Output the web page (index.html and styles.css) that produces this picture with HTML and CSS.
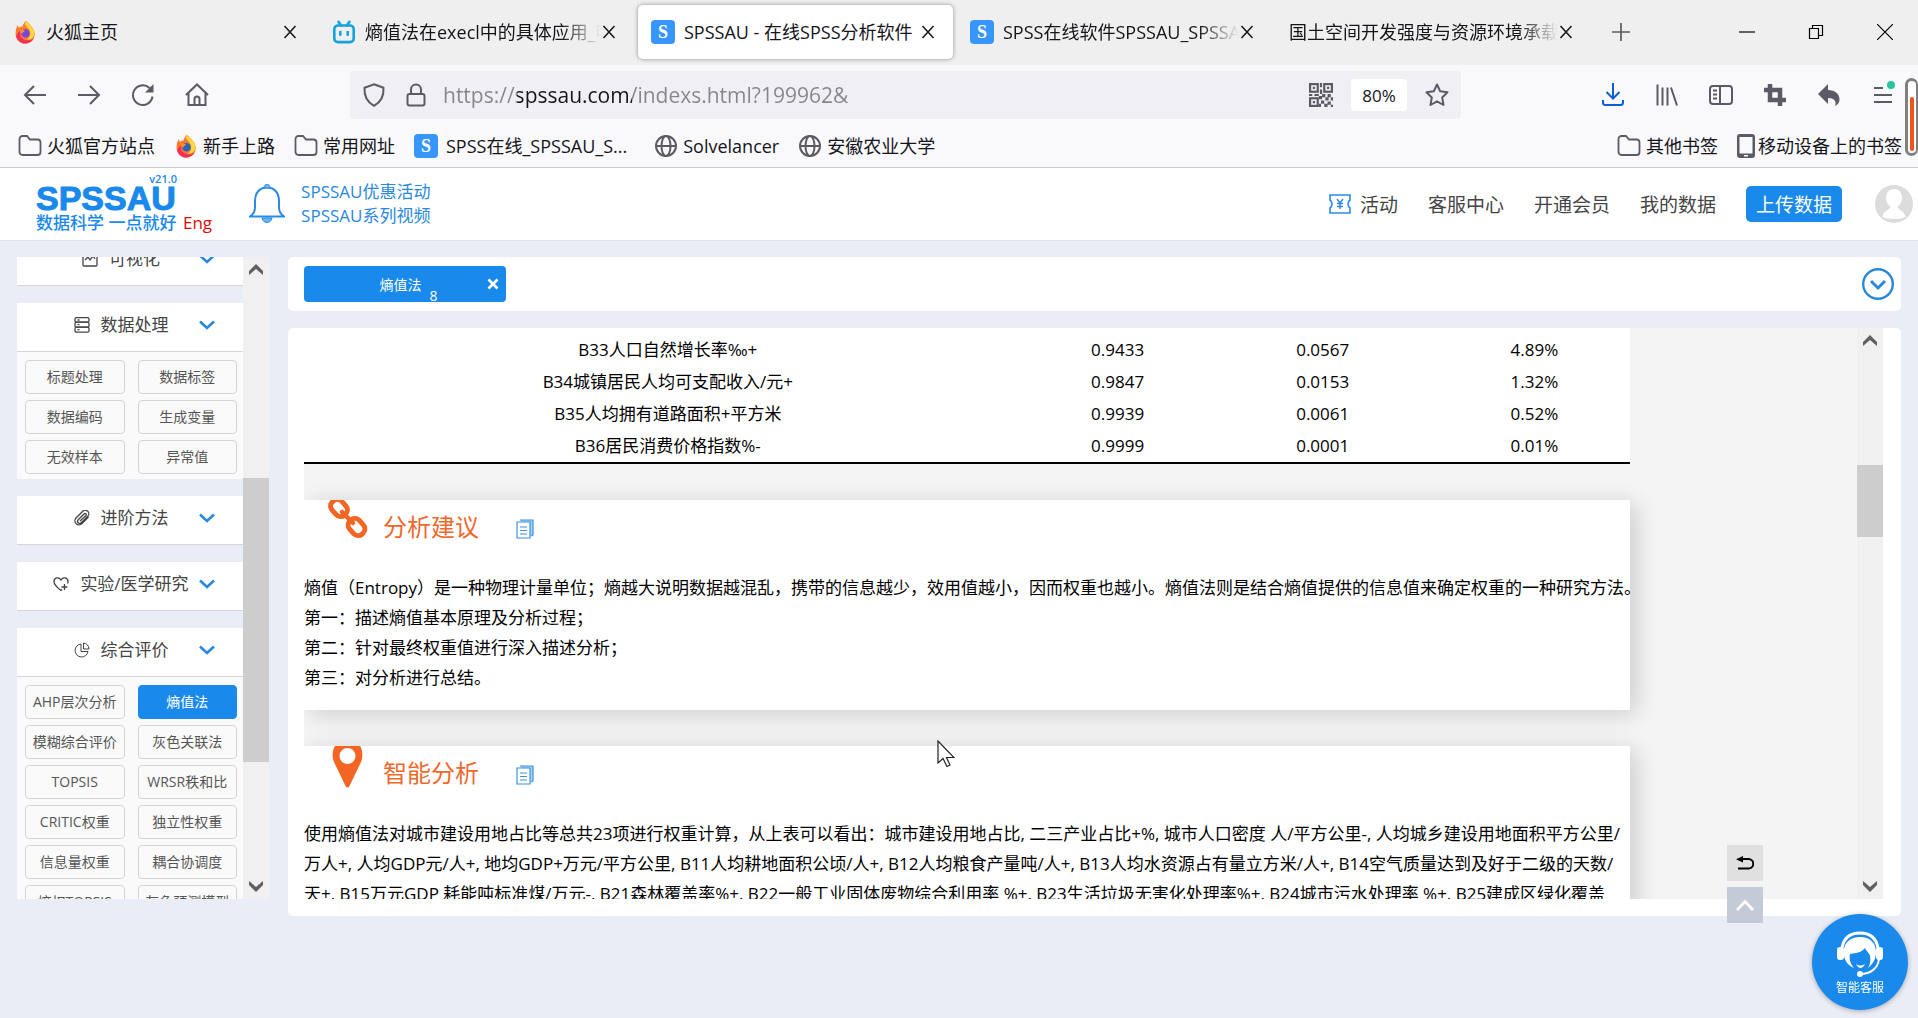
FILE: index.html
```html
<!DOCTYPE html>
<html lang="zh-CN">
<head>
<meta charset="utf-8">
<title>SPSSAU - 在线SPSS分析软件</title>
<link rel="stylesheet" href="styles.css">
</head>
<body>
<svg class="defs" aria-hidden="true">
  <symbol id="i-x" viewBox="0 0 16 16"><path d="M2.500 2l11 12M13.500 2l-11 12" fill="none" stroke="currentColor" stroke-width="1.500"/></symbol>
  <symbol id="i-folder" viewBox="0 0 24 24"><path d="M1.500 5a3 3 0 0 1 3-3h4.500l3 3.500h7.500a3 3 0 0 1 3 3V18a3 3 0 0 1-3 3h-15a3 3 0 0 1-3-3z" fill="none" stroke="currentColor" stroke-width="1.800"/></symbol>
  <symbol id="i-globe" viewBox="0 0 24 24"><g fill="none" stroke="currentColor" stroke-width="2"><circle cx="12" cy="12" r="10"/><ellipse cx="12" cy="12" rx="4.500" ry="10"/><path d="M2 12h20"/></g></symbol>
  <symbol id="i-down" viewBox="0 0 16 10"><path d="M1 1.500l7 6.500 7-6.500" fill="none" stroke="currentColor" stroke-width="2.600"/></symbol>
  <symbol id="i-sdown" viewBox="0 0 14 12"><path d="M0 0l7 6 7-6v4l-7 7-7-7z" fill="currentColor"/></symbol>
  <symbol id="i-sup" viewBox="0 0 14 12"><path d="M0 12l7-6 7 6v-4L7 1 0 8z" fill="currentColor"/></symbol>
  <symbol id="i-fox" viewBox="0 0 24 28">
    <path d="M13 1c3 2 4 4 6 6 4 4 5 8 4 12-1 5-5 8.500-11 8.500S1 23 1 16c0-4 1-7 2-10l2 3c1-1 3-1.500 4-1.500C10 5 11 3 13 1z" fill="#ff7a2c"/>
    <path d="M13 1c-2 4 0 6 3 9 3 4 3 10-2 13 5 1 9-3 9-8 0-5-4-7-6-10-1.500-2-3-3-4-4z" fill="#ffd83b"/>
    <path d="M1.500 19c2 5 6 8.500 10.500 8.500 4 0 8-2 10-6-4 3-9 3-13 0-3-2-3-6-2-9-3 1-4 4-5.500 6.500z" fill="#f22f5c"/>
    <circle cx="12.500" cy="15.500" r="5" fill="var(--core)"/>
    <path d="M6 12c2-1 4-1 6 0-1 2-3 2-3 4-2-1-3-2-3-4z" fill="#ff8f2a"/>
  </symbol>
  <symbol id="i-copy" viewBox="0 0 18 20"><path d="M4 1h13v15l-2 1" fill="#a9d3f8" stroke="#3d92dd" stroke-width="1.200"/><path d="M1 3h13v16H1z" fill="#fff" stroke="#3d92dd" stroke-width="1.200"/><path d="M4 8h7M4 11.500h7M4 15h7" stroke="#3d92dd" stroke-width="1.200"/></symbol>
</svg>

<header class="browser">
  <nav class="tabs">
    <div class="tab">
      <svg class="ico tab-ico core-violet"><use href="#i-fox"/></svg>
      <span class="tab-title">火狐主页</span>
      <button class="tab-x" aria-label="关闭"><svg><use href="#i-x"/></svg></button>
    </div>
    <div class="tab">
      <svg class="ico tab-ico" viewBox="0 0 24 26"><g fill="none" stroke="#14a3d9" stroke-width="2.800" stroke-linecap="round"><rect x="1.500" y="6" width="21" height="18" rx="4"/><path d="M6 2l3 4M18 2l-3 4M8 13v3M16 13v3"/></g></svg>
      <span class="tab-title fade">熵值法在execl中的具体应用_哔哩</span>
      <button class="tab-x" aria-label="关闭"><svg><use href="#i-x"/></svg></button>
    </div>
    <div class="tab active">
      <span class="ico tab-ico s-logo">S</span>
      <span class="tab-title">SPSSAU - 在线SPSS分析软件</span>
      <button class="tab-x" aria-label="关闭"><svg><use href="#i-x"/></svg></button>
    </div>
    <div class="tab">
      <span class="ico tab-ico s-logo">S</span>
      <span class="tab-title fade">SPSS在线软件SPSSAU_SPSSAU</span>
      <button class="tab-x" aria-label="关闭"><svg><use href="#i-x"/></svg></button>
    </div>
    <div class="tab">
      <span class="tab-title fade">国土空间开发强度与资源环境承载力</span>
      <button class="tab-x" aria-label="关闭"><svg><use href="#i-x"/></svg></button>
    </div>
    <button class="new-tab" aria-label="新标签"><svg viewBox="0 0 18 18"><path d="M9 0v18M0 9h18" stroke="#5b5b66" stroke-width="1.700"/></svg></button>
    <div class="win">
      <button aria-label="最小化"><svg viewBox="0 0 16 16"><path d="M0 8h16" stroke="#000" stroke-width="1.200"/></svg></button>
      <button aria-label="还原"><svg viewBox="0 0 16 16"><path d="M1.500 4.500h9v10h-9zM4.500 4.500v-3h10v10h-4" fill="none" stroke="#000" stroke-width="1.200"/></svg></button>
      <button aria-label="关闭窗口"><svg viewBox="0 0 16 16"><path d="M0 0l16 16M16 0L0 16" stroke="#000" stroke-width="1.200"/></svg></button>
    </div>
  </nav>

  <div class="toolbar">
    <div class="nav-btns">
      <button aria-label="后退"><svg viewBox="0 0 24 24"><path d="M23 12H2M11 3L2 12l9 9" /></svg></button>
      <button aria-label="前进"><svg viewBox="0 0 24 24"><path d="M1 12h21M13 3l9 9-9 9"/></svg></button>
      <button aria-label="刷新"><svg viewBox="0 0 24 24"><path d="M21.500 13.500a9.800 9.800 0 1 1-3-8.500"/><path d="M22.500 1v8.500H14z" fill="currentColor" stroke="none"/></svg></button>
      <button aria-label="主页"><svg viewBox="0 0 24 24"><path d="M1 12L12 1.500 23 12M3.500 10v12h17V10M9.500 22v-6a2.500 2.500 0 0 1 5 0v6"/></svg></button>
    </div>
    <div class="urlbar">
      <svg class="ub-ico" viewBox="0 0 24 24"><path d="M12 1.200l9.500 3.600c.5 8-2 14-9.500 18C4.500 18.800 2 12.800 2.500 4.800z"/></svg>
      <svg class="ub-ico lock" viewBox="0 0 24 24"><rect x="3.500" y="11" width="17" height="11.500" rx="2"/><path d="M7 11V6.500a5 5 0 0 1 10 0V11"/></svg>
      <input class="url" aria-label="网址" value="https://spssau.com/indexs.html?199962&amp;">
      <svg class="ub-ico qr" viewBox="0 0 22 22"><g fill="none" stroke-width="2"><rect x="1" y="1" width="7" height="7"/><rect x="14" y="1" width="7" height="7"/><rect x="1" y="14" width="7" height="7"/></g><path stroke="none" fill="currentColor" d="M3.500 3.500h2v2h-2zM16.500 3.500h2v2h-2zM3.500 16.500h2v2h-2zM10 0h2v4h-2zM10 6h2v4h-2zM0 10h3v2H0zM5 10h4v2H5zM12 10h3v3h-3zM17 10h3v3h-3zM9 12h3v3H9zM15 13h3v3h-3zM20 13h2v3h-2zM11 16h3v3h-3zM17 17h3v3h-3zM14 19h3v3h-3zM20 20h2v2h-2zM9 19h2v3H9z"/></svg>
      <button class="zoom">80%</button>
      <svg class="ub-ico" viewBox="0 0 24 24"><path stroke-linejoin="round" d="M12 1.500l3.200 6.800 7.300 1-5.300 5.200 1.300 7.500-6.500-3.600L5.500 22l1.300-7.500L1.500 9.300l7.300-1z"/></svg>
    </div>
    <div class="tools">
      <button class="dl" aria-label="下载"><svg viewBox="0 0 24 24"><path d="M12 0v15M5.500 9l6.500 6.500L18.500 9M2 17v2.500A2.500 2.500 0 0 0 4.500 22h15a2.500 2.500 0 0 0 2.500-2.500V17"/></svg></button>
      <button aria-label="书库"><svg viewBox="0 0 24 24"><path d="M2.500 1.500v21M7.500 4.500v18M12.500 4.500v18M16 4.500l6 18"/></svg></button>
      <button aria-label="侧栏"><svg viewBox="0 0 24 24"><rect x="1" y="3" width="22" height="18" rx="3"/><path d="M11 3v18M4 7.500h4M4 11.500h4M4 15.500h4"/></svg></button>
      <button aria-label="截图"><svg viewBox="0 0 24 24"><path d="M7 1v16h16M1 7h16v16" stroke-width="4.500"/></svg></button>
      <button aria-label="撤销"><svg viewBox="0 0 24 24"><path stroke="none" fill="currentColor" d="M11 1v6c7 0 11.500 4 11.500 9.500 0 3-1.500 5-4.500 6.500 2-5-1-8-7-8v6L1 11z"/></svg></button>
      <button class="menu" aria-label="菜单"><svg viewBox="0 0 24 24"><path d="M3 5h9M3 12h18M3 19h18"/><circle cx="20" cy="2" r="4" fill="#2ac3a2" stroke="none"/></svg></button>
    </div>
  </div>

  <nav class="bookmarks">
    <a href="#"><svg class="ico"><use href="#i-folder"/></svg>火狐官方站点</a>
    <a href="#"><svg class="ico core-blue"><use href="#i-fox"/></svg>新手上路</a>
    <a href="#"><svg class="ico"><use href="#i-folder"/></svg>常用网址</a>
    <a href="#" class="wide"><span class="ico s-logo">S</span>SPSS在线_SPSSAU_S...</a>
    <a href="#"><svg class="ico"><use href="#i-globe"/></svg>Solvelancer</a>
    <a href="#"><svg class="ico"><use href="#i-globe"/></svg>安徽农业大学</a>
    <a href="#" class="push"><svg class="ico"><use href="#i-folder"/></svg>其他书签</a>
    <a href="#" class="phone"><svg class="ico" viewBox="0 0 18 24"><path fill="currentColor" fill-rule="evenodd" d="M3 0h12a3 3 0 0 1 3 3v18a3 3 0 0 1-3 3H3a3 3 0 0 1-3-3V3a3 3 0 0 1 3-3zM2.500 3v16.500h13V3zM7 21h4v1.500H7z"/></svg>移动设备上的书签</a>
  </nav>
  <div class="meter"><span></span></div>
</header>

<header class="site">
  <a href="#" class="logo">
    <span class="ver">v21.0</span>
    <span class="brand">SPSSAU</span>
    <span class="slogan">数据科学 一点就好</span>
  </a>
  <a href="#" class="eng">Eng</a>
  <svg class="bell" viewBox="0 0 36 40"><path d="M1 32.500c3-2 5-4 5-9V17C6 9 10.500 3.500 18 3.500S30 9 30 17v6.500c0 5 2 7 5 9z" fill="none" stroke="#2a8ae6" stroke-width="2"/><path d="M13 34c1 6 9 6 10 0zM15 4c0-5 6-5 6 0z" fill="#6fb3f2" stroke="#2a8ae6"/></svg>
  <div class="promo"><a href="#">SPSSAU优惠活动</a><a href="#">SPSSAU系列视频</a></div>
  <nav class="site-nav">
    <a href="#" class="act"><svg viewBox="0 0 22 20"><path d="M1 1h20v5a5 5 0 0 0 0 8v5H1v-5a5 5 0 0 0 0-8z" fill="none" stroke="#2a8ae6" stroke-width="1.600"/><path d="M8 5l3 4 3-4M11 9v6M8 9.500h6M8 12.500h6" fill="none" stroke="#2a8ae6" stroke-width="1.400"/></svg>活动</a>
    <a href="#">客服中心</a>
    <a href="#">开通会员</a>
    <a href="#">我的数据</a>
    <button class="upload">上传数据</button>
    <svg class="avatar" viewBox="0 0 38 38"><circle cx="19" cy="19" r="19" fill="#dcdcdc"/><path d="M19 4c-5 0-8 4-8 9 0 4 2 7 4.500 9-1 3-7.500 4-8 10 4 2.500 19 2.500 23 0-.5-6-7-7-8-10C25 20 27 17 27 13c0-5-3-9-8-9z" fill="#fff"/></svg>
  </nav>
</header>

<main class="work">
  <div class="side">
    <div class="side-list">
      <section class="group">
        <button class="head"><span class="label"><svg viewBox="0 0 16 16"><rect x="1" y="1" width="14" height="14" rx="1"/><path d="M3 9l3-3 2 3 3-4 2 3"/></svg>可视化</span><svg class="chev"><use href="#i-down"/></svg></button>
      </section>
      <section class="group">
        <button class="head"><span class="label"><svg viewBox="0 0 16 16"><rect x="1" y="0.600" width="14" height="4.600" rx="1.500"/><rect x="1" y="5.200" width="14" height="5" rx="1.500"/><rect x="1" y="10.200" width="14" height="5" rx="1.500"/><path d="M3.500 3h2M3.500 7.700h2M3.500 12.700h2"/></svg>数据处理</span><svg class="chev"><use href="#i-down"/></svg></button>
        <div class="items">
          <button>标题处理</button><button>数据标签</button>
          <button>数据编码</button><button>生成变量</button>
          <button>无效样本</button><button>异常值</button>
        </div>
      </section>
      <section class="group">
        <button class="head"><span class="label"><svg viewBox="0 0 16 16"><path d="M14.500 7l-6.500 6.500a4 4 0 0 1-6-5.500L8.500 1.500a3.500 3.500 0 0 1 5.500 4.500l-6.500 6.500a2 2 0 0 1-3.500-2.500L10 4a1 1 0 0 1 2 1.500L6 11"/></svg>进阶方法</span><svg class="chev"><use href="#i-down"/></svg></button>
      </section>
      <section class="group">
        <button class="head"><span class="label"><svg viewBox="0 0 16 16"><path d="M8 14.500C4 11.500 1 9 1 5.500 1 1.500 6 .5 8 4c2-3.500 7-2.500 7 1.500 0 .8-.1 1.500-.4 2M8 14.500l1-1M11.500 8v6M8.500 11h6"/></svg>实验/医学研究</span><svg class="chev"><use href="#i-down"/></svg></button>
      </section>
      <section class="group">
        <button class="head"><span class="label"><svg viewBox="0 0 16 16"><path d="M7 2a6.500 6.500 0 1 0 7 7.500H7zM9.500 1v6H15A6 6 0 0 0 9.500 1z" stroke-width="1"/></svg>综合评价</span><svg class="chev"><use href="#i-down"/></svg></button>
        <div class="items">
          <button>AHP层次分析</button><button class="on">熵值法</button>
          <button>模糊综合评价</button><button>灰色关联法</button>
          <button>TOPSIS</button><button>WRSR秩和比</button>
          <button>CRITIC权重</button><button>独立性权重</button>
          <button>信息量权重</button><button>耦合协调度</button>
          <button>熵权TOPSIS</button><button>灰色预测模型</button>
        </div>
      </section>
    </div>
    <div class="bar side-bar"><svg class="arrow"><use href="#i-sup"/></svg><span class="thumb"></span><svg class="arrow"><use href="#i-sdown"/></svg></div>
  </div>

  <div class="content">
    <div class="chips">
      <div class="chip"><span>熵值法</span><sub>8</sub><button aria-label="关闭"><svg viewBox="0 0 12 12"><path d="M1.500 1.500l9 9M10.500 1.500l-9 9" stroke="#fff" stroke-width="2.600"/></svg></button></div>
      <button class="more" aria-label="展开"><svg viewBox="0 0 32 32"><circle cx="16" cy="16" r="14.800"/><path d="M9 13l7 7 7-7" stroke-width="3"/></svg></button>
    </div>
    <div class="result">
      <div class="report">
        <table class="weights">
          <colgroup><col class="c1"><col class="c2"><col class="c3"><col class="c4"></colgroup>
          <tbody>
          <tr><td>B33人口自然增长率‰+</td><td>0.9433</td><td>0.0567</td><td>4.89%</td></tr>
          <tr><td>B34城镇居民人均可支配收入/元+</td><td>0.9847</td><td>0.0153</td><td>1.32%</td></tr>
          <tr><td>B35人均拥有道路面积+平方米</td><td>0.9939</td><td>0.0061</td><td>0.52%</td></tr>
          <tr><td>B36居民消费价格指数%-</td><td>0.9999</td><td>0.0001</td><td>0.01%</td></tr>
          </tbody>
        </table>
        <section class="card">
          <div class="card-head">
            <svg class="mark" viewBox="0 0 44 42"><g fill="none" stroke="#f26522" stroke-width="5"><rect x="7.500" y="-1" width="13" height="18" rx="6" transform="rotate(-42 14 8)"/><rect x="25" y="18" width="13" height="18" rx="6" transform="rotate(-42 31.500 27)"/><path d="M17 12l11 11" stroke-width="4.500" stroke-linecap="round"/></g></svg>
            <h2>分析建议</h2>
            <button aria-label="复制"><svg><use href="#i-copy"/></svg></button>
          </div>
          <p>熵值（Entropy）是一种物理计量单位；熵越大说明数据越混乱，携带的信息越少，效用值越小，因而权重也越小。熵值法则是结合熵值提供的信息值来确定权重的一种研究方法。<br>第一：描述熵值基本原理及分析过程；<br>第二：针对最终权重值进行深入描述分析；<br>第三：对分析进行总结。</p>
        </section>
        <section class="card">
          <div class="card-head">
            <svg class="mark" viewBox="0 0 44 42"><path fill="#f26522" fill-rule="evenodd" d="M10 0h25c3 5 3 11 1 16L24.500 40q-2 3-4 0L9 16C7 11 7 5 10 0zM22.500 2a8 8 0 1 0 0 16 8 8 0 0 0 0-16z"/></svg>
            <h2>智能分析</h2>
            <button aria-label="复制"><svg><use href="#i-copy"/></svg></button>
          </div>
          <p>使用熵值法对城市建设用地占比等总共23项进行权重计算，从上表可以看出：城市建设用地占比, 二三产业占比+%, 城市人口密度 人/平方公里-, 人均城乡建设用地面积平方公里/<br>万人+, 人均GDP元/人+, 地均GDP+万元/平方公里, B11人均耕地面积公顷/人+, B12人均粮食产量吨/人+, B13人均水资源占有量立方米/人+, B14空气质量达到及好于二级的天数/<br>天+, B15万元GDP 耗能吨标准煤/万元-, B21森林覆盖率%+, B22一般工业固体废物综合利用率 %+, B23生活垃圾无害化处理率%+, B24城市污水处理率 %+, B25建成区绿化覆盖</p>
        </section>
      </div>
      <div class="bar main-bar"><svg class="arrow"><use href="#i-sup"/></svg><span class="thumb"></span><svg class="arrow"><use href="#i-sdown"/></svg></div>
    </div>
  </div>
</main>

<div class="floaters">
  <button class="back" aria-label="返回"><svg viewBox="0 0 18 14"><path d="M5 3h7.500a4 4 0 0 1 0 9.500H2" fill="none" stroke="#000" stroke-width="2"/><path d="M7 0v6.500L0 3.200z"/></svg></button>
  <button class="top" aria-label="回到顶部"><svg viewBox="0 0 18 12"><path d="M1 11l8-8.500 8 8.500" fill="none" stroke="#fff" stroke-width="2.600"/></svg></button>
</div>
<button class="service">
  <svg viewBox="0 0 46 46"><path d="M5 17C7 6 14 2 23 2s16 4 18 15" fill="none" stroke="#fff" stroke-width="3"/><path d="M23 6C13 6 8 12 7 18c-1 5 0 10 4 15 2 2 4 3 6 4-4-5-5-9-4-14 7-1 12-2 15-6 2 4 5 6 5 8 1 5 0 9-2 12 5-4 8-9 8-16C39 12 33 6 23 6z" fill="#fff"/><rect x="0" y="16" width="7" height="13" rx="3" fill="#fff"/><rect x="39" y="16" width="7" height="13" rx="3" fill="#fff"/><path d="M42 28c-1 9-8 15-19 15" fill="none" stroke="#fff" stroke-width="2"/><circle cx="23" cy="43" r="3" fill="#fff"/><path d="M19 33q4 3 9 0-2 4-4.500 4T19 33z" fill="#fff"/></svg>
  智能客服
</button>
<svg class="cursor" viewBox="0 0 18 28"><path d="M1 1v22l5-4.500 4 8 3-1.500-3.500-7.500H17z" fill="#fff" stroke="#222" stroke-width="1.200"/></svg>
</body>
</html>
```
FILE: styles.css
```css
:root {
  --blue: #1989ec;
  --link: #2a88dc;
  --orange: #f0682c;
  --ink: #5b5b66;
}
* { box-sizing: border-box; }
body {
  margin: 0;
  min-height: 100vh;
  display: flex;
  flex-direction: column;
  background: #eaedf5;
  color: #000;
  font-family: "Open Sans", "Noto Sans CJK SC", sans-serif;
  font-size: 17px;
}
button {
  margin: 0;
  padding: 0;
  border: 0;
  background: none;
  font: inherit;
  color: inherit;
}
a { color: inherit; text-decoration: none; }
svg { display: block; }
.defs { display: none; }

/* browser chrome */
.browser { position: relative; background: #f9f9fb; border-bottom: 1px solid #ccc; font-size: 18px; color: #15141a; }
.tabs { display: flex; align-items: center; gap: 4px; height: 65px; padding-bottom: 1px; background: #efefef; }
.tab {
  flex: 0 1 315px;
  min-width: 0;
  display: flex;
  align-items: center;
  height: 54px;
  padding: 0 17px 0 13px;
  border-radius: 5px;
}
.tab.active { background: #fff; box-shadow: 0 0 4px rgba(0, 0, 0, .4); }
.ico { flex: none; width: 24px; height: 24px; color: var(--ink); }
.tab-ico { margin-right: 9px; }
.core-violet { --core: #7a46d8; }
.core-blue { --core: #2767b8; }
.s-logo {
  border-radius: 4px;
  background: #3796fc;
  color: #fff;
  font: 700 18px/24px "Liberation Serif", serif;
  text-align: center;
}
.tab-title { flex: 1; min-width: 0; overflow: hidden; white-space: nowrap; line-height: 28px; }
.tab-title.fade { mask-image: linear-gradient(to right, #000 calc(100% - 40px), transparent); }
.tab-x { flex: none; width: 16px; height: 16px; }
.tab-x svg { width: 16px; height: 16px; }
.new-tab { width: 18px; margin-left: 17px; }
.win { display: flex; gap: 53px; margin-left: auto; padding-right: 25px; }
.win svg { width: 16px; height: 16px; }

.toolbar { display: flex; align-items: center; padding: 6px 23px 0; color: var(--ink); }
.toolbar svg { width: 24px; height: 24px; fill: none; stroke: currentColor; stroke-width: 2; }
.nav-btns { display: flex; gap: 30px; width: 327px; }
.urlbar {
  flex: 1;
  display: flex;
  align-items: center;
  height: 48px;
  padding: 0 12px;
  border-radius: 4px;
  background: #f0f0f4;
}
.ub-ico { flex: none; margin-right: 18px; }
.ub-ico.lock { margin-right: 15px; }
.ub-ico:last-child { margin-right: 0; }
.url {
  flex: 1;
  min-width: 0;
  height: 32px;
  padding: 0;
  border: 0;
  outline: 0;
  font: inherit;
  font-size: 21px;
  line-height: 32px;
  color: transparent;
  caret-color: #000;
  background: linear-gradient(to right, #85858c 74px, #15141a 74px, #15141a 189px, #85858c 189px);
  background-clip: text;
}
.zoom { width: 56px; height: 32px; margin-right: 18px; border-radius: 4px; background: #fff; color: #15141a; font-size: 17px; }
.tools { display: flex; gap: 30px; margin-left: 140px; }
.dl { color: #0a5fd8; }
.tools svg { overflow: visible; }

.bookmarks { display: flex; align-items: center; gap: 19px; height: 48px; padding: 5px 16px 0 18px; }
.bookmarks a { display: flex; align-items: center; gap: 5px; line-height: 28px; white-space: nowrap; }
.bookmarks .wide { gap: 8px; margin-right: 8px; }
.bookmarks .push { margin-left: auto; }
.bookmarks .phone { gap: 3px; }
.phone .ico { width: 18px; }
.meter {
  position: absolute;
  right: 0;
  bottom: 11px;
  width: 13px;
  height: 78px;
  padding: 16px 2px 2px;
  border: 3px solid #808080;
  border-right-width: 2px;
  border-radius: 7px;
  background: #fff;
}
.meter span { display: block; height: 100%; border-radius: 3px; background: #f0541e; }

/* site header */
.site { display: flex; align-items: center; height: 73px; padding: 0 5px 0 36px; background: #fff; border-bottom: 1px solid #dfe2ea; }
.logo { display: flex; flex-direction: column; width: 141px; color: var(--blue); }
.ver { font-size: 11px; font-weight: 600; line-height: 12px; text-align: right; }
.brand { font: 700 34px/26px "Liberation Sans", sans-serif; -webkit-text-stroke: 1px var(--blue); }
.slogan { font-size: 17px; font-weight: 500; line-height: 24px; white-space: nowrap; }
.eng { align-self: flex-end; margin: 0 37px 3px 6px; color: #d80c0c; line-height: 28px; }
.bell { width: 36px; height: 40px; margin-right: 16px; }
.promo { display: flex; flex-direction: column; color: var(--link); font-size: 17px; line-height: 24px; }
.site-nav { display: flex; align-items: center; gap: 30px; margin-left: auto; color: #444; font-size: 19px; }
.act { display: flex; align-items: center; gap: 9px; }
.act svg { width: 22px; height: 20px; }
.upload { width: 96px; height: 36px; border-radius: 5px; background: var(--blue); color: #fff; }
.avatar { width: 38px; height: 38px; margin-left: 3px; }

/* workspace */
.work { flex: 1; display: flex; gap: 19px; padding: 16px 17px 102px 17px; }
.side { flex: none; display: flex; width: 252px; height: calc(100vh - 376px); overflow: hidden; }
.side-list { flex: 1; margin-top: -20px; }
.group { margin-bottom: 17px; background: #fafafa; }
.head {
  display: flex;
  align-items: center;
  width: 100%;
  height: 49px;
  padding: 0 28px 4px 26px;
  border-bottom: 1px solid #d6d6d6;
  background: #fff;
  color: #444;
}
.label { flex: 1; display: flex; align-items: center; justify-content: center; gap: 11px; line-height: 24px; white-space: nowrap; }
.label svg { width: 16px; height: 16px; fill: none; stroke: #444; stroke-width: 1.3; }
.chev { width: 16px; height: 10px; color: var(--link); }
.items { display: grid; grid-template-columns: 1fr 1fr; gap: 6px 13px; padding: 8px 6px 5px 8px; }
.items button {
  height: 34px;
  border: 1px solid #d5d5d5;
  border-radius: 4px;
  color: #555;
  font-size: 14px;
  line-height: 20px;
  white-space: nowrap;
}
.items .on { border-color: var(--blue); background: var(--blue); color: #fff; }
.bar { flex: none; display: flex; flex-direction: column; align-items: center; width: 26px; padding: 6px 0; background: #f0f0f0; }
.arrow { flex: none; width: 14px; height: 12px; color: #606060; }
.thumb { width: 26px; background: #cdcdcd; }
.side-bar .thumb { height: 284px; margin: 203px 0 auto; }
.main-bar .thumb { height: 72px; margin: 119px 0 auto; }

.content { flex: 1; min-width: 0; display: flex; flex-direction: column; gap: 17px; }
.chips { display: flex; align-items: center; justify-content: space-between; height: 54px; padding: 0 7px 0 16px; border-radius: 5px; background: #fff; }
.chip {
  display: grid;
  grid-template-columns: 1fr 10px 1fr;
  align-items: center;
  width: 202px;
  height: 36px;
  padding: 0 7px 0 66px;
  border-radius: 4px;
  background: var(--blue);
  color: #fff;
  font-size: 14px;
}
.chip span { padding-right: 8px; text-align: right; white-space: nowrap; }
.chip sub { align-self: end; font-size: 14px; line-height: 13px; }
.chip button { justify-self: end; }
.chip svg { width: 12px; height: 12px; }
.more svg { width: 32px; height: 32px; fill: none; stroke: var(--link); stroke-width: 2.4; }
.result { display: flex; height: calc(100vh - 430px); padding: 0 18px 17px 16px; border-radius: 5px; background: #fff; }
.report { flex: 1; min-width: 0; overflow: hidden; padding-right: 227px; background: #f4f4f4; }
.weights { width: 100%; table-layout: fixed; border-collapse: separate; border-spacing: 0; padding: 6px 3px 0 0; border-bottom: 2px solid #000; background: #fff; }
.weights td { height: 32px; padding: 0; line-height: 24px; text-align: center; }
.c1 { width: 55%; }
.c2 { width: 13%; }
.c3 { width: 18%; }
.c4 { width: 14%; }
.card { height: 210px; margin-top: 36px; background: #fff; box-shadow: 6px 4px 22px rgba(0, 0, 0, .16); }
.card-head { display: flex; align-items: flex-start; height: 73px; padding-left: 21px; color: var(--orange); }
.card-head h2 { margin: 9px 37px 0 14px; font-size: 24px; font-weight: 400; line-height: 36px; }
.mark { width: 44px; height: 42px; }
.card-head button { margin-top: 19px; }
.card-head button svg { width: 18px; height: 20px; }
.card p { margin: 0; line-height: 30px; white-space: nowrap; }

/* floating pieces */
.floaters { position: fixed; right: 155px; bottom: 95px; display: grid; gap: 6px; }
.floaters button { display: grid; place-items: center; width: 36px; height: 36px; }
.back { background: #e0e0e0; }
.top { background: #c5cad9; }
.back svg { width: 18px; height: 14px; }
.top svg { width: 18px; height: 12px; }
.service {
  position: fixed;
  right: 10px;
  bottom: 8px;
  display: flex;
  flex-direction: column;
  align-items: center;
  width: 96px;
  height: 96px;
  padding-top: 17px;
  border-radius: 50%;
  background: var(--blue);
  box-shadow: 0 1px 5px rgba(0, 0, 0, .3);
  color: #fff;
  font-size: 12px;
  line-height: 22px;
}
.service svg { width: 46px; height: 46px; }
.cursor { position: fixed; left: 937px; top: 740px; width: 18px; height: 28px; }
```
